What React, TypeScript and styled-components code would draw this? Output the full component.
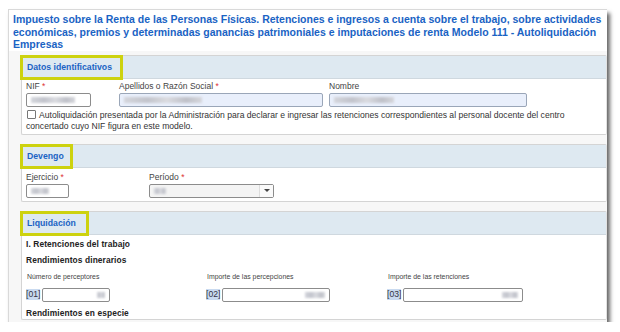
import React from "react";
import styled, { createGlobalStyle } from "styled-components";

const Global = createGlobalStyle`
  html, body { margin: 0; padding: 0; background: #fff; }
  body { font-family: "Liberation Sans", Arial, sans-serif; }
`;

const Window = styled.div`
  box-sizing: border-box;
  width: 599px;
  height: 313px;
  margin: 9px 0 0 8px;
  background: #f7f7f7;
  border-top: 1px solid #d9d9d9;
  border-left: 1px solid #d9d9d9;
  box-shadow: 3px 4px 4px rgba(0, 0, 0, 0.6);
  overflow: hidden;
  display: flex;
  flex-direction: column;
`;

const Title = styled.h1`
  margin: 0;
  padding: 3px 0 0 4px;
  font-size: 10.5px;
  line-height: 12.5px;
  font-weight: bold;
  color: #1a63c4;
  background: #fff;
`;

const Content = styled.div`
  display: flex;
  flex-direction: column;
  gap: 9px;
  padding: 4px 0 0 12px;
`;

const Panel = styled.section`
  background: #fff;
  border: 1px solid #d4d4d4;
  border-right-color: #e2e2e2;
  border-radius: 2px;
`;

const PanelHeader = styled.div`
  height: 22px;
  background: #dee9f1;
  border-bottom: 1px solid #cfd8df;
  display: flex;
  align-items: center;
`;

const HeaderTitle = styled.div<{ $w: number }>`
  box-sizing: border-box;
  width: ${(p) => p.$w}px;
  height: 25px;
  margin: -1px 0 -2px -2px;
  border: 3px solid #cdd20f;
  padding-left: 4px;
  display: flex;
  align-items: center;
  font-size: 8.7px;
  font-weight: bold;
  color: #1a63c4;
`;

const Body = styled.div<{ $pad?: string }>`
  padding: ${(p) => p.$pad ?? "3px 4px 4px"};
  font-size: 8.6px;
  color: #333;
`;

const FieldRow = styled.div<{ $mt?: number }>`
  display: flex;
  align-items: flex-end;
  margin-top: ${(p) => p.$mt ?? 0}px;
`;

const Field = styled.div<{ $w: number; $ml?: number }>`
  width: ${(p) => p.$w}px;
  margin-left: ${(p) => p.$ml ?? 0}px;
  display: flex;
  flex-direction: column;
  gap: 2px;
`;

const Label = styled.label`
  font-size: 8.5px;
  line-height: 10px;
  color: #444;
`;

const Req = styled.span`
  color: #d33;
`;

const Input = styled.div<{ $tone?: "blue" | "plain" | "grey"; $w?: number }>`
  box-sizing: border-box;
  height: 14px;
  width: ${(p) => (p.$w ? `${p.$w}px` : "auto")};
  border: 1px solid ${(p) => (p.$tone === "blue" ? "#9aa6b8" : "#8c8c8c")};
  border-radius: 2px;
  background: ${(p) =>
    p.$tone === "blue" ? "#e9effb" : p.$tone === "grey" ? "#f4f4f4" : "#fff"};
  display: flex;
  align-items: center;
  justify-content: ${(p) => (p.$w ? "flex-end" : "flex-start")};
  padding: 0 4px;
  position: relative;
`;

const Smudge = styled.span<{ $w: number }>`
  display: block;
  width: ${(p) => p.$w}px;
  height: 6px;
  background: linear-gradient(90deg, #d4d6dc 0%, #c2c4cc 30%, #dadbe0 55%, #bfc1c9 80%, #d6d7dc 100%);
  filter: blur(0.8px);
`;

const SelectArrow = styled.span`
  position: absolute;
  right: 0;
  top: 0;
  bottom: 0;
  width: 13px;
  border-left: 1px solid #ddd;
  background: #fafafa;
  display: flex;
  align-items: center;
  justify-content: center;
  &::after {
    content: "";
    border-left: 3px solid transparent;
    border-right: 3px solid transparent;
    border-top: 3px solid #444;
  }
`;

const CheckLine = styled.div`
  margin-top: 3px;
  font-size: 8.6px;
  line-height: 11px;
  color: #333;
`;

const Box = styled.span`
  display: inline-block;
  box-sizing: border-box;
  width: 9px;
  height: 9px;
  border: 1px solid #777;
  border-radius: 1px;
  background: #fff;
  margin: 0 3px -1px 1px;
`;

const SubHead = styled.div<{ $mt?: number }>`
  font-size: 8.4px;
  font-weight: bold;
  color: #222;
  line-height: 11px;
  letter-spacing: 0.1px;
  margin-top: ${(p) => p.$mt ?? 0}px;
`;

const SmallLabel = styled.div`
  font-size: 6.9px;
  line-height: 10px;
  color: #444;
  padding-left: 1px;
`;

const CodeRow = styled.div`
  display: flex;
  align-items: center;
  gap: 2px;
`;

const Code = styled.span`
  font-size: 8.6px;
  color: #334;
  background: #c9daf0;
  line-height: 11px;
`;

const Box3 = styled.div<{ $w: number; $ml?: number }>`
  width: ${(p) => p.$w}px;
  margin-left: ${(p) => p.$ml ?? 0}px;
  display: flex;
  flex-direction: column;
  gap: 6px;
`;

const Numbered = ({ code, label, w, iw, ml, sm }: { code: string; label: string; w: number; iw: number; ml?: number; sm: number }) => (
  <Box3 $w={w} $ml={ml}>
    <SmallLabel>{label}</SmallLabel>
    <CodeRow>
      <Code>{code}</Code>
      <Input $w={iw}>
        <Smudge $w={sm} />
      </Input>
    </CodeRow>
  </Box3>
);

export default function App() {
  return (
    <>
      <Global />
      <Window>
        <Title>
          Impuesto sobre la Renta de las Personas Físicas. Retenciones e ingresos a cuenta sobre el trabajo, sobre actividades
          económicas, premios y determinadas ganancias patrimoniales e imputaciones de renta Modelo 111 - Autoliquidación
          Empresas
        </Title>
        <Content>
          <Panel>
            <PanelHeader>
              <HeaderTitle $w={103}>Datos identificativos</HeaderTitle>
            </PanelHeader>
            <Body $pad="2px 4px 2px">
              <FieldRow>
                <Field $w={65}>
                  <Label>
                    NIF <Req>*</Req>
                  </Label>
                  <Input>
                    <Smudge $w={44} />
                  </Input>
                </Field>
                <Field $w={204} $ml={28}>
                  <Label>
                    Apellidos o Razón Social <Req>*</Req>
                  </Label>
                  <Input $tone="blue">
                    <Smudge $w={78} />
                  </Input>
                </Field>
                <Field $w={198} $ml={6}>
                  <Label>Nombre</Label>
                  <Input $tone="blue">
                    <Smudge $w={60} />
                  </Input>
                </Field>
              </FieldRow>
              <CheckLine>
                <Box />
                Autoliquidación presentada por la Administración para declarar e ingresar las retenciones correspondientes al personal docente del centro
                <br />
                concertado cuyo NIF figura en este modelo.
              </CheckLine>
            </Body>
          </Panel>
          <Panel>
            <PanelHeader>
              <HeaderTitle $w={53}>Devengo</HeaderTitle>
            </PanelHeader>
            <Body $pad="4px 4px 3px">
              <FieldRow>
                <Field $w={43}>
                  <Label>
                    Ejercicio <Req>*</Req>
                  </Label>
                  <Input>
                    <Smudge $w={18} />
                  </Input>
                </Field>
                <Field $w={125} $ml={80}>
                  <Label>
                    Período <Req>*</Req>
                  </Label>
                  <Input $tone="grey">
                    <Smudge $w={12} />
                    <SelectArrow />
                  </Input>
                </Field>
              </FieldRow>
            </Body>
          </Panel>
          <Panel>
            <PanelHeader>
              <HeaderTitle $w={69}>Liquidación</HeaderTitle>
            </PanelHeader>
            <Body $pad="4px 4px 0">
              <SubHead>I. Retenciones del trabajo</SubHead>
              <SubHead $mt={5}>Rendimientos dinerarios</SubHead>
              <FieldRow $mt={6}>
                <Numbered code="[01]" label="Número de perceptores" w={180} iw={68} sm={8} />
                <Numbered code="[02]" label="Importe de las percepciones" w={180} iw={108} sm={20} />
                <Numbered code="[03]" label="Importe de las retenciones" w={140} iw={120} sm={16} ml={1} />
              </FieldRow>
              <SubHead $mt={6}>Rendimientos en especie</SubHead>
            </Body>
          </Panel>
        </Content>
      </Window>
    </>
  );
}
